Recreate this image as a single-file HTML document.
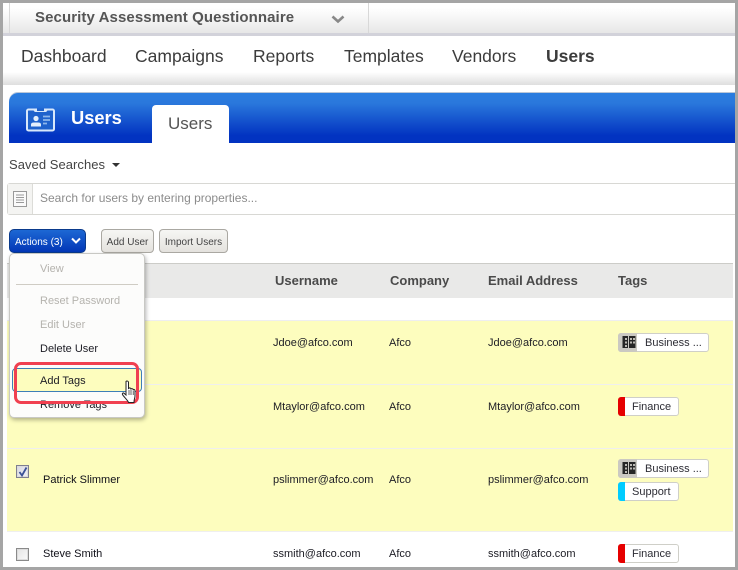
<!DOCTYPE html>
<html>
<head>
<meta charset="utf-8">
<style>
html,body{margin:0;padding:0;background:#fff}
body{width:738px;height:570px;position:relative;overflow:hidden;font-family:"Liberation Sans",sans-serif;color:#333}
.a{position:absolute}
.t{position:absolute;white-space:nowrap;line-height:1}
.nav{font-size:17.5px;color:#3c3c3c;top:48px}
.th{font-size:13px;font-weight:bold;color:#4a4a4a;top:274px}
.td{font-size:11px;color:#1c1c24}
.nm{font-size:11px;color:#101018}
.row{position:absolute;left:7px;width:726px;background:#fdfdbe}
.cb{position:absolute;left:16px;width:11px;height:11px;border:1px solid #8a8a8a;background:linear-gradient(135deg,#e4e4e4,#fafafa);box-shadow:inset 0 0 0 1px #dcdcdc}
.tag{position:absolute;box-sizing:border-box;background:#fff;border:1px solid #cfcfc8;border-radius:3px;font-size:11px;color:#2c2c34;line-height:18px;height:19px;white-space:nowrap}
.fin{left:618px;width:61px;padding-left:13px}
.fin i{position:absolute;left:-1px;top:-1px;width:7px;height:19px;border-radius:3px 0 0 3px}
.biz{left:618px;width:91px;padding-left:26px}
.biz i{position:absolute;left:-1px;top:-1px;width:19px;height:19px;background:#cbc9c2;border-radius:3px 0 0 3px}
.biz svg{position:absolute;left:3px;top:1px}
.mi{position:absolute;left:40px;font-size:11px;line-height:1;white-space:nowrap}
.dis{color:#b5b3ae;font-weight:normal}
.btn{position:absolute;box-sizing:border-box;top:229px;height:24px;background:linear-gradient(#f6f6f4,#e4e2de);border:1px solid #aaa8a2;border-radius:4px;font-size:10px;color:#444;text-align:center;line-height:25px;white-space:nowrap}
</style>
</head>
<body>
<!-- top bar -->
<div class="a" style="left:0;top:0;width:738px;height:33px;background:linear-gradient(#fff 8px,#e7e7e7)"></div>
<div class="a" style="left:0;top:33px;width:738px;height:3px;background:#d2d2da"></div>
<div class="a" style="left:9px;top:3px;width:1px;height:30px;background:#d8d8d8"></div>
<div class="a" style="left:368px;top:3px;width:1px;height:30px;background:#d8d8d8"></div>
<div class="t" style="left:35px;top:10px;font-size:15px;font-weight:bold;color:#555;letter-spacing:.09px">Security Assessment Questionnaire</div>
<svg class="a" style="left:331px;top:14px" width="14" height="10" viewBox="0 0 14 10"><path d="M1.500 2.500 L7 7.500 L12.500 2.500" fill="none" stroke="#888" stroke-width="2.6"/></svg>

<!-- nav -->
<div class="a" style="left:0;top:36px;width:738px;height:49px;background:linear-gradient(#fff 36px,#dedede)"></div>
<div class="t nav" style="left:21px">Dashboard</div>
<div class="t nav" style="left:135px">Campaigns</div>
<div class="t nav" style="left:253px">Reports</div>
<div class="t nav" style="left:344px">Templates</div>
<div class="t nav" style="left:452px">Vendors</div>
<div class="t nav" style="left:546px;font-weight:bold">Users</div>

<!-- blue header -->
<div class="a" style="left:9px;top:93px;width:726px;height:50px;background:linear-gradient(#2a7cdf,#2a78dc 20%,#0233c1 85%,#0233c1);border-radius:9px 0 0 0;box-shadow:0 -1px 0 #b9c6d8"></div>
<svg class="a" style="left:25px;top:108px" width="31" height="24" viewBox="0 0 31 24">
<rect x="2" y="1.500" width="27" height="21" rx="1.500" fill="#1f62cc" stroke="#d8e8fb" stroke-width="2"/>
<path d="M8 1 Q9 4 10.500 4 H20.500 Q22 4 23 1Z" fill="#d8e8fb"/>
<rect x="12" y="0.500" width="7" height="2.500" fill="#1f62cc"/>
<circle cx="11" cy="10.500" r="2.600" fill="#e4effc"/>
<path d="M6 18.500 V16.500 Q6 14.500 9 14.500 H13 Q16 14.500 16 16.500 V18.500Z" fill="#e4effc"/>
<path d="M18 8.500h7M18 12h7M18 15.500h4" stroke="#8fb6ea" stroke-width="1.700"/>
</svg>
<div class="t" style="left:71px;top:109px;font-size:18.3px;font-weight:bold;color:#fff">Users</div>
<div class="a" style="left:152px;top:105px;width:77px;height:38px;background:#fff;border-radius:4px 4px 0 0"></div>
<div class="t" style="left:168px;top:115px;font-size:17px;color:#555">Users</div>

<!-- saved searches -->
<div class="t" style="left:9px;top:158px;font-size:13px;color:#444;letter-spacing:.05px">Saved Searches</div>
<div class="a" style="left:112px;top:163px;width:0;height:0;border-left:4px solid transparent;border-right:4px solid transparent;border-top:4px solid #333"></div>

<!-- search box -->
<div class="a" style="left:7px;top:183px;width:740px;height:32px;box-sizing:border-box;border:1px solid #d8d8d4;border-radius:3px;background:#fff"></div>
<div class="a" style="left:8px;top:184px;width:24px;height:30px;background:#f4f4f2;border-right:1px solid #dcdcd8"></div>
<svg class="a" style="left:13px;top:191px" width="14" height="16" viewBox="0 0 14 16"><rect x=".5" y=".5" width="13" height="15" fill="#fafafa" stroke="#999"/><path d="M3 4h8M3 6.500h8M3 9h8M3 11.500h8" stroke="#999" stroke-width="1"/></svg>
<div class="t" style="left:40px;top:192px;font-size:12px;color:#8c8c8c">Search for users by entering properties...</div>

<!-- buttons -->
<div class="a" style="left:9px;top:229px;width:77px;height:24px;box-sizing:border-box;background:linear-gradient(#1d68d4,#0236b6);border:1px solid #0a3a8c;border-radius:5px"></div>
<div class="t" style="left:15px;top:238px;font-size:10px;color:#fff">Actions (3)</div>
<svg class="a" style="left:71px;top:237px" width="10" height="8" viewBox="0 0 10 8"><path d="M1 1.500 L5 5.500 L9 1.500" fill="none" stroke="#fff" stroke-width="2"/></svg>
<div class="btn" style="left:101px;width:53px">Add User</div>
<div class="btn" style="left:159px;width:69px">Import Users</div>

<!-- table header -->
<div class="a" style="left:7px;top:263px;width:726px;height:35px;background:#e9e9e8;border-top:1px solid #ccccc8;box-sizing:border-box"></div>
<div class="t th" style="left:275px">Username</div>
<div class="t th" style="left:390px">Company</div>
<div class="t th" style="left:488px">Email Address</div>
<div class="t th" style="left:618px">Tags</div>

<!-- rows -->
<div class="row" style="top:321px;height:63px"></div>
<div class="row" style="top:385px;height:63px"></div>
<div class="row" style="top:449px;height:82px"></div>
<div class="a" style="left:7px;top:320px;width:726px;height:1px;background:#eeeef0"></div>
<div class="a" style="left:7px;top:384px;width:726px;height:1px;background:#efefef"></div>
<div class="a" style="left:7px;top:448px;width:726px;height:1px;background:#efefef"></div>
<div class="a" style="left:7px;top:531px;width:726px;height:1px;background:#efefef"></div>

<div class="t td" style="left:273px;top:338px">Jdoe@afco.com</div>
<div class="t td" style="left:389px;top:338px">Afco</div>
<div class="t td" style="left:488px;top:338px">Jdoe@afco.com</div>
<div class="tag biz" style="top:333px"><i></i><svg width="14" height="14" viewBox="0 0 14 14"><path d="M0.500 1h5.500v12H0.500zM7 1h6.500v12H7z" fill="#262626"/><path d="M3 3h2v2H3zM3 6.500h2v2H3zM3 10h2v2H3zM8 3h2v2H8zM11 3h2v2h-2zM8 6.500h2v2H8zM11 6.500h2v2h-2z" fill="#bdbbb4"/></svg>Business ...</div>

<div class="t td" style="left:273px;top:402px">Mtaylor@afco.com</div>
<div class="t td" style="left:389px;top:402px">Afco</div>
<div class="t td" style="left:488px;top:402px">Mtaylor@afco.com</div>
<div class="tag fin" style="top:397px"><i style="background:#e60000"></i>Finance</div>

<div class="cb" style="top:465px;border-color:#7f7f90;background:linear-gradient(135deg,#d8d8e2,#f2f2f6)"></div>
<svg class="a" style="left:17px;top:466px" width="12" height="12" viewBox="0 0 12 12"><path d="M2.500 6 L5 9.500 L9.500 1.500" fill="none" stroke="#3c5296" stroke-width="1.800"/></svg>
<div class="t nm" style="left:43px;top:475px">Patrick Slimmer</div>
<div class="t td" style="left:273px;top:475px">pslimmer@afco.com</div>
<div class="t td" style="left:389px;top:475px">Afco</div>
<div class="t td" style="left:488px;top:475px">pslimmer@afco.com</div>
<div class="tag biz" style="top:459px"><i></i><svg width="14" height="14" viewBox="0 0 14 14"><path d="M0.500 1h5.500v12H0.500zM7 1h6.500v12H7z" fill="#262626"/><path d="M3 3h2v2H3zM3 6.500h2v2H3zM3 10h2v2H3zM8 3h2v2H8zM11 3h2v2h-2zM8 6.500h2v2H8zM11 6.500h2v2h-2z" fill="#bdbbb4"/></svg>Business ...</div>
<div class="tag fin" style="top:482px"><i style="background:#00ccff"></i>Support</div>

<div class="cb" style="top:548px"></div>
<div class="t nm" style="left:43px;top:549px">Steve Smith</div>
<div class="t td" style="left:273px;top:549px">ssmith@afco.com</div>
<div class="t td" style="left:389px;top:549px">Afco</div>
<div class="t td" style="left:488px;top:549px">ssmith@afco.com</div>
<div class="tag fin" style="top:544px"><i style="background:#e60000"></i>Finance</div>

<!-- dropdown -->
<div class="a" style="left:9px;top:253px;width:136px;height:165px;box-sizing:border-box;background:#fcfcfb;border:1px solid #c8c8c4;border-radius:5px;box-shadow:1px 2px 4px rgba(0,0,0,.3)"></div>
<div class="mi dis" style="top:264px">View</div>
<div class="a" style="left:16px;top:284px;width:122px;height:1px;background:#cfccc4"></div>
<div class="mi dis" style="top:296px">Reset Password</div>
<div class="mi dis" style="top:320px">Edit User</div>
<div class="mi" style="top:344px;color:#1c1c24">Delete User</div>
<div class="a" style="left:12px;top:368px;width:130px;height:24px;box-sizing:border-box;background:#fdfdbe;border:1px solid #3d7fb8;border-radius:4px"></div>
<div class="mi" style="top:376px;color:#1c1c24">Add Tags</div>
<div class="mi" style="top:400px;color:#1c1c24">Remove Tags</div>
<div class="a" style="left:14px;top:362px;width:125px;height:42px;box-sizing:border-box;border:3px solid #f04050;border-radius:7px"></div>
<svg class="a" style="left:121px;top:380px" width="18" height="24" viewBox="0 0 18 24">
<path d="M5 1.500c.7-.8 2.300-.6 2.500.8V9l.5-1c1-.4 1.800.1 2 1 .6-.6 1.800-.4 2.200.6.600-.4 1.800-.1 1.800 1.100V16c0 2-1 3-1 6.500H7.500c-.5-2-5-6-6-8-.5-1 .5-2 1.500-1.300l2 1.800z" fill="#fff" stroke="#222" stroke-width="1"/>
<path d="M8 10v5M10 10v5M12.200 10.500V15" stroke="#222" stroke-width=".7"/>
</svg>

<!-- screenshot frame -->
<div class="a" style="left:0;top:0;width:738px;height:3px;background:#a5a5a5"></div>
<div class="a" style="left:0;top:567px;width:738px;height:3px;background:#a5a5a5"></div>
<div class="a" style="left:0;top:0;width:3px;height:570px;background:#a5a5a5"></div>
<div class="a" style="left:735px;top:0;width:3px;height:570px;background:#a5a5a5"></div>
</body>
</html>
